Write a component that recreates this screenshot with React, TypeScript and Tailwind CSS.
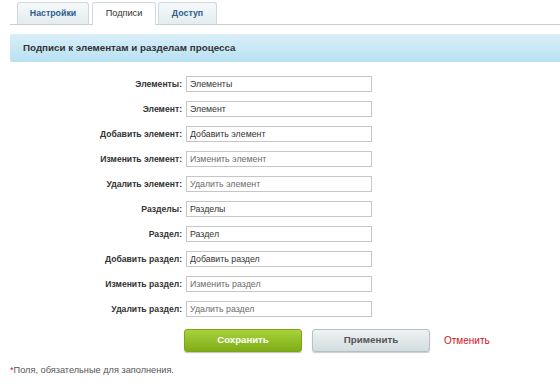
const fields = [
  { label: "Элементы", muted: false },
  { label: "Элемент", muted: false },
  { label: "Добавить элемент", muted: false },
  { label: "Изменить элемент", muted: true },
  { label: "Удалить элемент", muted: true },
  { label: "Разделы", muted: false },
  { label: "Раздел", muted: false },
  { label: "Добавить раздел", muted: false },
  { label: "Изменить раздел", muted: true },
  { label: "Удалить раздел", muted: true },
];

export default function App() {
  return (
    <div className="min-h-[391px] bg-white pl-[10px] pt-[3px] font-['Liberation_Sans',Arial,sans-serif] text-[#333]">
      {/* tabs */}
      <div className="flex h-[22px] items-end border-b border-[#c9d0d3] pl-[7px]">
        <div className="flex h-[22px] w-[72px] items-center justify-center rounded-t-[3px] border border-b-0 border-[#cfd8dc] bg-gradient-to-b from-[#f6f9fa] to-[#e4ecef] text-[8.8px] font-bold text-[#2c5d8f]">
          Настройки
        </div>
        <div className="relative -mb-px ml-[3px] flex h-[23px] w-[64px] items-center justify-center rounded-t-[3px] border border-b-0 border-[#cfd8dc] bg-white pb-px text-[9.2px] text-[#333]">
          Подписи
        </div>
        <div className="ml-[2px] flex h-[22px] w-[59px] items-center justify-center rounded-t-[3px] border border-b-0 border-[#cfd8dc] bg-gradient-to-b from-[#f6f9fa] to-[#e4ecef] text-[8.8px] font-bold text-[#2c5d8f]">
          Доступ
        </div>
      </div>

      {/* section header */}
      <div className="mt-[9px] flex h-[28px] items-center rounded-l-[2px] bg-gradient-to-b from-[#d9eff8] to-[#b8e1f3] pl-[13px] text-[9.8px] font-bold text-[#333]">
        Подписи к элементам и разделам процесса
      </div>

      {/* form */}
      <div className="mt-[14px] flex flex-col gap-[9px]">
        {fields.map((f) => (
          <div key={f.label} className="flex h-[16px] items-center">
            <label className="w-[176px] pr-[4px] text-right text-[8.6px] font-bold text-[#333]">
              {f.label}:
            </label>
            <input
              readOnly
              value={f.label}
              className={`h-[16px] w-[186px] border border-[#c6c6c6] bg-white px-[3px] font-['Liberation_Sans',Arial,sans-serif] text-[8.8px] outline-none ${
                f.muted ? "text-[#6b6b6b]" : "text-[#333]"
              }`}
            />
          </div>
        ))}
      </div>

      {/* buttons */}
      <div className="mt-[12px] flex items-center pl-[174px]">
        <button className="h-[23px] w-[118px] rounded-[3px] border border-[#7da517] bg-gradient-to-b from-[#a8d23a] to-[#7fad16] text-[9.6px] font-bold text-white shadow-[0_1px_1px_rgba(0,0,0,0.25)]">
          Сохранить
        </button>
        <button className="ml-[10px] h-[23px] w-[118px] rounded-[3px] border border-[#b5c0c4] bg-gradient-to-b from-[#eef2f3] to-[#d3dde0] text-[9.8px] font-bold text-[#555] shadow-[0_1px_1px_rgba(0,0,0,0.2)]">
          Применить
        </button>
        <span className="ml-[14px] text-[10px] text-[#d2121a]">Отменить</span>
      </div>

      <div className="mt-[12px] text-[9.2px] text-[#555]">
        <span className="text-[#d2121a]">*</span>Поля, обязательные для заполнения.
      </div>
    </div>
  );
}
